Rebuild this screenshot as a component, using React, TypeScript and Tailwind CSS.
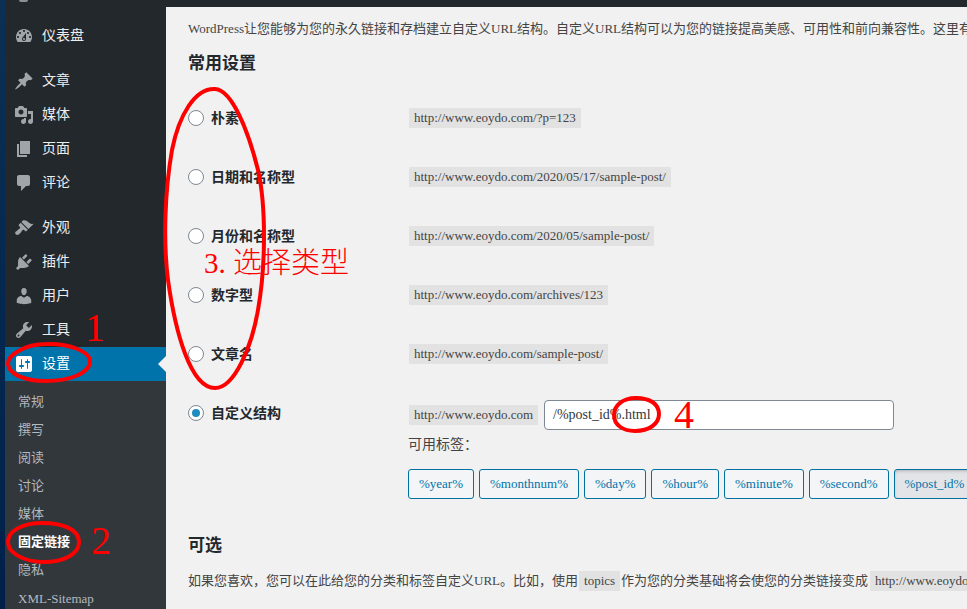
const icons = {
  dashboard:
    "M3.76 16h12.48c1.1-1.37 1.76-3.11 1.76-5 0-4.42-3.58-8-8-8s-8 3.58-8 8c0 1.89.66 3.63 1.76 5zM10 4c.55 0 1 .45 1 1s-.45 1-1 1-1-.45-1-1 .45-1 1-1zM6 6c.55 0 1 .45 1 1s-.45 1-1 1-1-.45-1-1 .45-1 1-1zm8 0c.55 0 1 .45 1 1s-.45 1-1 1-1-.45-1-1 .45-1 1-1zm-5.37 5.55L12 7v6c0 1.1-.9 2-2 2s-2-.9-2-2c0-.57.24-1.08.63-1.45zM4 10c.55 0 1 .45 1 1s-.45 1-1 1-1-.45-1-1 .45-1 1-1zm12 0c.55 0 1 .45 1 1s-.45 1-1 1-1-.45-1-1 .45-1 1-1zm-5 3c0-.55-.45-1-1-1s-1 .45-1 1 .45 1 1 1 1-.45 1-1z",
  post: "M10.44 3.02l1.82-1.82 6.36 6.35-1.83 1.82c-1.05-.68-2.48-.57-3.41.36l-.75.75c-.92.93-1.04 2.35-.35 3.41l-1.83 1.82-2.41-2.41-2.8 2.79c-.42.42-3.38 2.71-3.8 2.29s1.86-3.39 2.28-3.81l2.79-2.79L4.1 9.36l1.83-1.82c1.05.69 2.48.57 3.4-.36l.75-.75c.93-.92 1.05-2.35.36-3.41z",
  media:
    "M13 11V4c0-.55-.45-1-1-1h-1.67L9 1H5L3.67 3H2c-.55 0-1 .45-1 1v7c0 .55.45 1 1 1h10c.55 0 1-.45 1-1zM7 4.5c1.38 0 2.5 1.12 2.5 2.5S8.38 9.5 7 9.5 4.5 8.38 4.5 7 5.62 4.5 7 4.5zM14 6h5v10.5c0 1.38-1.12 2.5-2.5 2.5S14 17.88 14 16.5s1.12-2.5 2.5-2.5c.17 0 .34.02.5.05V9h-3V6zm-4 8.05V13h2v3.5c0 1.38-1.12 2.5-2.5 2.5S7 17.88 7 16.5 8.12 14 9.5 14c.17 0 .34.02.5.05z",
  page: "M6 15V2h10v13H6zm-1 1h8v2H3V5h2v11z",
  comments:
    "M5 2h9c1.1 0 2 .9 2 2v7c0 1.1-.9 2-2 2h-2l-5 5v-5H5c-1.1 0-2-.9-2-2V4c0-1.1.9-2 2-2z",
  appearance:
    "M14.48 11.06L7.41 3.99l1.5-1.5c.5-.56 2.3-.47 3.51.32 1.21.8 1.43 1.28 2.91 2.1 1.18.64 2.45 1.26 4.45.85zm-.71.71L6.7 4.7 4.93 6.47c-.39.39-.39 1.02 0 1.41l1.06 1.06c.39.39.39 1.03 0 1.42-.6.6-1.43 1.11-2.21 1.69-.35.26-.7.53-1.01.84C1.43 13.23.4 14.95 1.74 16.3c1.34 1.34 3.06.31 4.4-1.03.31-.31.58-.66.84-1.01.58-.78 1.09-1.61 1.69-2.21.39-.39 1.02-.39 1.41 0l1.06 1.06c.39.39 1.02.39 1.41 0z",
  plugins:
    "M13.11 4.36L9.87 7.6 8 5.73l3.24-3.24c.35-.34 1.05-.2 1.56.32.52.51.66 1.21.31 1.55zm-8 1.77l.91-1.12 9.01 9.01-1.19.84c-.71.71-2.63 1.16-3.82 1.16H6.14L4.9 17.26c-.59.59-1.54.59-2.12 0-.59-.58-.59-1.53 0-2.12l1.24-1.24v-3.88c0-1.13.4-3.19 1.09-3.89zm7.26 3.97l3.24-3.24c.34-.35 1.04-.21 1.55.31.52.51.66 1.21.31 1.55l-3.24 3.25z",
  users:
    "M10 9.25c-2.27 0-2.73-3.44-2.73-3.44C7 4.02 7.82 2 9.97 2c2.16 0 2.98 2.02 2.71 3.81 0 0-.41 3.44-2.68 3.44zm0 2.57L12.72 10c2.39 0 4.52 2.33 4.52 4.53v2.49s-3.65 1.13-7.24 1.13c-3.65 0-7.24-1.13-7.24-1.13v-2.49c0-2.25 1.94-4.48 4.47-4.48z",
  tools:
    "M16.68 9.77c-1.34 1.34-3.3 1.67-4.95.99l-5.41 6.52c-.99.99-2.59.99-3.58 0s-.99-2.59 0-3.57l6.52-5.42c-.68-1.65-.35-3.61.99-4.95 1.28-1.28 3.12-1.62 4.72-1.06l-2.89 2.89 2.82 2.82 2.86-2.87c.53 1.58.18 3.39-1.08 4.65zM3.81 16.21c.4.39 1.04.39 1.43 0 .4-.4.4-1.04 0-1.43-.39-.4-1.03-.4-1.43 0-.39.39-.39 1.03 0 1.43z",
  settings:
    "M18 16V4c0-1.1-.9-2-2-2H4c-1.1 0-2 .9-2 2v12c0 1.1.9 2 2 2h12c1.1 0 2-.9 2-2zM8 11h1c.55 0 1 .45 1 1s-.45 1-1 1H8v1.5c0 .28-.22.5-.5.5s-.5-.22-.5-.5V13H6c-.55 0-1-.45-1-1s.45-1 1-1h1V5.5c0-.28.22-.5.5-.5s.5.22.5.5V11zm5-2h-1c-.55 0-1-.45-1-1s.45-1 1-1h1V5.5c0-.28.22-.5.5-.5s.5.22.5.5V7h1c.55 0 1 .45 1 1s-.45 1-1 1h-1v5.5c0 .28-.22.5-.5.5s-.5-.22-.5-.5V9z",
};

type IconName = keyof typeof icons;

function MenuRow({ icon, label, className = "" }: { icon: IconName; label: string; className?: string }) {
  return (
    <div className={`flex h-[34px] shrink-0 items-center pl-[9px] text-sm text-[#eeeeee] ${className}`}>
      <svg viewBox="0 0 20 20" className="h-5 w-5 fill-[#a0a5aa]">
        <path d={icons[icon]} />
      </svg>
      <span className="ml-[8px]">{label}</span>
    </div>
  );
}

function Code({ children }: { children: string }) {
  return <code className="inline-block h-5 whitespace-nowrap bg-[#e2e2e2] px-[5px] align-top font-['Liberation_Serif','Noto_Sans_CJK_SC',serif] text-[13px] leading-5 text-[#444]">{children}</code>;
}

const rows = [
  { label: "朴素", url: "http://www.eoydo.com/?p=123" },
  { label: "日期和名称型", url: "http://www.eoydo.com/2020/05/17/sample-post/" },
  { label: "月份和名称型", url: "http://www.eoydo.com/2020/05/sample-post/" },
  { label: "数字型", url: "http://www.eoydo.com/archives/123" },
  { label: "文章名", url: "http://www.eoydo.com/sample-post/" },
];

const tags = ["%year%", "%monthnum%", "%day%", "%hour%", "%minute%", "%second%", "%post_id%", "%postname%"];

export default function App() {
  return (
    <div className="relative flex h-[609px] w-[967px] overflow-hidden bg-[#f1f1f1] font-['Liberation_Serif','Noto_Sans_CJK_SC',serif]">
      <div className="w-[5px] shrink-0 bg-gradient-to-b from-[#0c2f55] to-[#00204a]" />

      <aside className="flex h-full w-[161px] shrink-0 flex-col overflow-hidden bg-[#23282d]">
        <div className="h-[19px] shrink-0">
          <div className="ml-[14px] h-[2px] w-[9px] rounded-b bg-[#8b9095]" />
        </div>
        <MenuRow icon="dashboard" label="仪表盘" />
        <MenuRow icon="post" label="文章" className="mt-[11px]" />
        <MenuRow icon="media" label="媒体" />
        <MenuRow icon="page" label="页面" />
        <MenuRow icon="comments" label="评论" />
        <MenuRow icon="appearance" label="外观" className="mt-[11px]" />
        <MenuRow icon="plugins" label="插件" />
        <MenuRow icon="users" label="用户" />
        <MenuRow icon="tools" label="工具" />
        <div className="relative flex h-[34px] shrink-0 items-center bg-[#0073aa] pl-[9px] text-sm text-white">
          <svg viewBox="0 0 20 20" className="h-5 w-5 fill-white">
            <path d={icons.settings} />
          </svg>
          <span className="ml-[8px]">设置</span>
          <div className="absolute right-0 top-[9px] h-0 w-0 border-y-[8px] border-r-[8px] border-y-transparent border-r-[#f1f1f1]" />
        </div>
        <div className="flex flex-1 flex-col bg-[#32373c] pl-[13px] pt-[7px] text-[13px] leading-7 text-[#b4b9be]">
          <div className="h-7 shrink-0">常规</div>
          <div className="h-7 shrink-0">撰写</div>
          <div className="h-7 shrink-0">阅读</div>
          <div className="h-7 shrink-0">讨论</div>
          <div className="h-7 shrink-0">媒体</div>
          <div className="h-7 shrink-0 font-bold text-white">固定链接</div>
          <div className="h-7 shrink-0">隐私</div>
          <div className="h-7 shrink-0 pt-px">XML-Sitemap</div>
        </div>
      </aside>

      <main className="flex min-w-0 flex-1 flex-col overflow-hidden">
        <div className="h-[7px] shrink-0 bg-[#23282d]" />
        <div className="pl-[22px] text-[#444]">
          <p className="mt-[12px] h-5 whitespace-nowrap text-[13px] leading-5">
            WordPress让您能够为您的永久链接和存档建立自定义URL结构。自定义URL结构可以为您的链接提高美感、可用性和前向兼容性。这里有一些可用的标签
          </p>
          <h2 className="mt-[13px] h-6 text-[17px] font-bold leading-6 text-[#23282d]">常用设置</h2>
          <div className="mt-[13px] flex flex-col">
            {rows.map((row) => (
              <div key={row.label} className="flex h-[59px]">
                <div className="flex w-[221px] shrink-0 items-start gap-[7px] pt-[21px]">
                  <span className="h-4 w-4 rounded-full border border-[#7e8993] bg-white" />
                  <span className="text-sm font-bold leading-[18px] text-[#23282d]">{row.label}</span>
                </div>
                <div className="pt-[19px]">
                  <Code>{row.url}</Code>
                </div>
              </div>
            ))}
            <div className="flex">
              <div className="flex w-[221px] shrink-0 items-start gap-[7px] pt-[21px]">
                <span className="flex h-4 w-4 items-center justify-center rounded-full border border-[#7e8993] bg-white">
                  <span className="h-2 w-2 rounded-full bg-[#1e8cbe]" />
                </span>
                <span className="text-sm font-bold leading-[18px] text-[#23282d]">自定义结构</span>
              </div>
              <div className="w-[600px] shrink-0 pt-[16px]">
                <div className="flex items-center gap-[6px]">
                  <Code>http://www.eoydo.com</Code>
                  <div className="flex h-[30px] w-[350px] items-center rounded border border-[#7e8993] bg-white px-2 text-sm text-[#32373c]">
                    /%post_id%.html
                  </div>
                </div>
                <p className="-ml-px mt-[5px] h-5 text-sm leading-5 text-[#444]">可用标签：</p>
                <div className="-ml-px mt-[14px] flex gap-[5px]">
                  {tags.map((tag) => (
                    <span
                      key={tag}
                      className={`flex h-[30px] shrink-0 items-center rounded-[3px] border border-[#0071a1] px-[10px] text-[13px] text-[#0073aa] ${tag === "%post_id%" ? "bg-[#e2e4e7] shadow-[inset_0_2px_5px_-3px_rgba(0,0,0,0.5)]" : "bg-[#f3f5f6]"}`}
                    >
                      {tag}
                    </span>
                  ))}
                </div>
              </div>
            </div>
          </div>
          <h2 className="mt-[35px] h-6 text-[17px] font-bold leading-6 text-[#23282d]">可选</h2>
          <p className="mt-[13px] h-5 whitespace-nowrap text-[13px] leading-5">
            如果您喜欢，您可以在此给您的分类和标签自定义URL。比如，使用
            <span className="ml-[1px] mr-[1px]"><Code>topics</Code></span>
            作为您的分类基础将会使您的分类链接变成
            <span className="ml-[2px]"><Code>http://www.eoydo.com/topics/uncategorized/hello-world/</Code></span>
          </p>
        </div>
      </main>

      {/* red marks drawn over the screenshot */}
      <svg viewBox="0 0 967 609" className="pointer-events-none absolute left-0 top-0 h-[609px] w-[967px] fill-none stroke-[#ff0000] stroke-[4px]">
        <path d="M215 89C232 90 248 130 258 170C266 205 266 265 258 310C252 345 235 388 215 388C190 388 175 330 168 280C163 240 165 190 172 150C179 115 195 88 215 89Z" />
        <path d="M46 344c-22 0-39 12-38 20 1 11 18 17 38 17 24 0 44-8 44-20 0-9-20-18-44-17z" />
        <path d="M42 523c-20 0-34 8-34 19s16 20 36 20 35-8 35-20c0-13-17-19-37-19z" />
        <path d="M636 398c-14 0-22 8-22 17 0 10 9 16 21 16 14 0 24-7 24-17 0-10-9-16-23-16z" />
      </svg>
      <span className="pointer-events-none absolute left-[85px] top-[308px] text-[40px] leading-[40px] text-[#ff0000]">1</span>
      <span className="pointer-events-none absolute left-[91px] top-[521px] text-[40px] leading-[40px] text-[#ff0000]">2</span>
      <span className="pointer-events-none absolute left-[204px] top-[243px] whitespace-nowrap text-[29px] font-light leading-[40px] text-[#ff0000]">3. 选择类型</span>
      <span className="pointer-events-none absolute left-[674px] top-[395px] text-[40px] leading-[40px] text-[#ff0000]">4</span>
    </div>
  );
}
